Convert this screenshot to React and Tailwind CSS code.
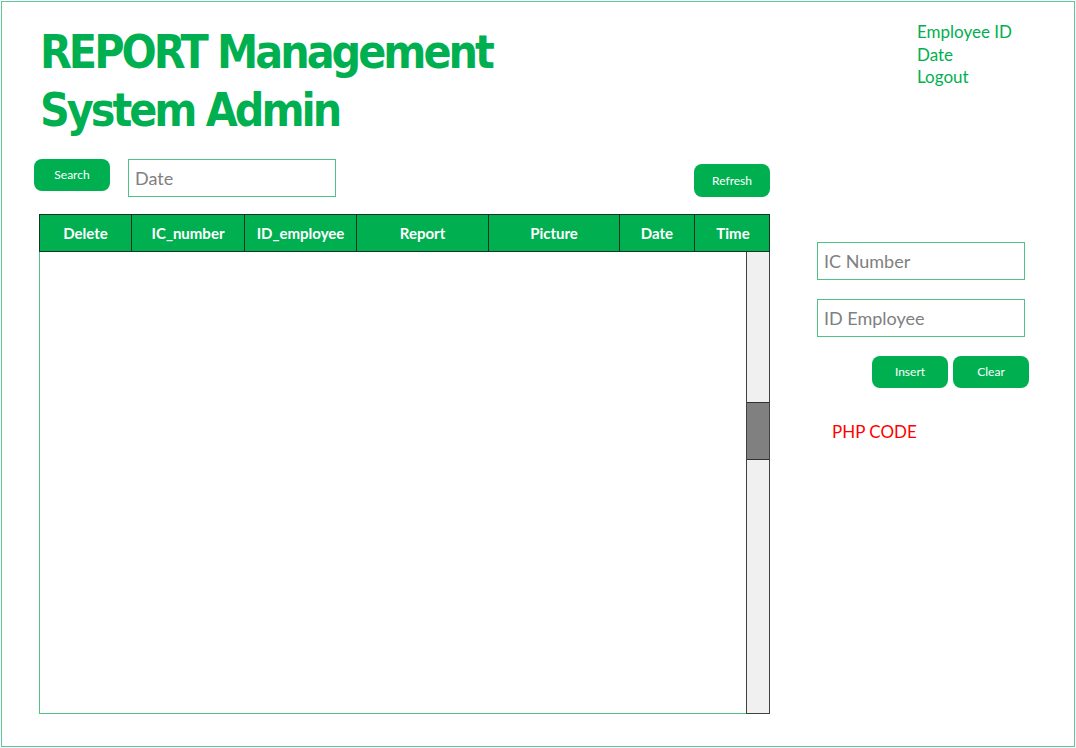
import React from "react";

const cols = [
  { label: "Delete", w: "w-[92px]" },
  { label: "IC_number", w: "w-[113px]" },
  { label: "ID_employee", w: "w-[112px]" },
  { label: "Report", w: "w-[132px]" },
  { label: "Picture", w: "w-[131px]" },
  { label: "Date", w: "w-[75px]" },
  { label: "Time", w: "w-[76px]" },
];

const GreenButton = ({ children, className = "" }) => (
  <button
    type="button"
    className={`w-[76px] bg-[#00b050] text-white text-[12px] rounded-[8px] ${className}`}
  >
    {children}
  </button>
);

const Field = ({ placeholder, className = "" }) => (
  <input
    type="text"
    placeholder={placeholder}
    className={`h-[38px] border border-[#4fc286] px-[6px] text-[18px] text-[#808080] placeholder:text-[#808080] outline-none ${className}`}
  />
);

export default function App() {
  return (
    <div
      className="w-[1076px] h-[748px] bg-white p-[1px]"
      style={{ fontFamily: "Lato, 'Open Sans', sans-serif" }}
    >
      <div className="w-[1074px] h-[746px] border border-[#5fc89a] flex flex-col">
        {/* header */}
        <div className="flex justify-between h-[157px]">
          <h1
            className="ml-[38px] mt-[21px] text-[#00b050] text-[46px] leading-[58px] font-bold tracking-[-3px]"
            style={{ fontFamily: "'DejaVu Sans Condensed', 'DejaVu Sans', sans-serif", fontStretch: "condensed" }}
          >
            REPORT Management
            <br />
            System Admin
          </h1>
          <div className="mr-[61px] mt-[19px] w-[96px] text-[#00b050] text-[17px] leading-[22.5px]">
            <div>Employee ID</div>
            <div>Date</div>
            <div>Logout</div>
          </div>
        </div>

        <div className="flex">
          {/* left column */}
          <div className="ml-[32px] flex flex-col">
            <div className="flex items-start">
              <GreenButton className="h-[32px]">Search</GreenButton>
              <Field placeholder="Date" className="ml-[18px] w-[208px]" />
              <GreenButton className="h-[33px] mt-[5px] ml-[358px]">Refresh</GreenButton>
            </div>

            <div className="ml-[5px] mt-[17px] w-[731px]">
              <div className="flex h-[38px] bg-[#00b050] border border-[#173322]">
                {cols.map((c, i) => (
                  <div
                    key={c.label}
                    className={`${c.w} shrink-0 flex items-center justify-center text-white font-bold text-[15px] ${
                      i < cols.length - 1 ? "border-r border-[#173322]" : ""
                    }`}
                  >
                    {c.label}
                  </div>
                ))}
              </div>
              <div className="flex h-[462px]">
                <div className="flex-1 border-l border-b border-[#4fc286]" />
                <div className="w-[24px] bg-[#f0f0f0] border border-t-0 border-[#404040] flex flex-col">
                  <div className="h-[150px]" />
                  <div className="h-[58px] bg-[#808080] border-y border-[#303030]" />
                </div>
              </div>
            </div>
          </div>

          {/* right column */}
          <div className="ml-[47px] mt-[83px] flex flex-col">
            <Field placeholder="IC Number" className="w-[208px]" />
            <Field placeholder="ID Employee" className="w-[208px] mt-[19px]" />
            <div className="flex gap-[5px] mt-[19px] ml-[55px]">
              <GreenButton className="h-[32px]">Insert</GreenButton>
              <GreenButton className="h-[32px]">Clear</GreenButton>
            </div>
            <div className="ml-[15px] mt-[31px] text-[#ff0000] text-[17px]">PHP CODE</div>
          </div>
        </div>
      </div>
    </div>
  );
}
